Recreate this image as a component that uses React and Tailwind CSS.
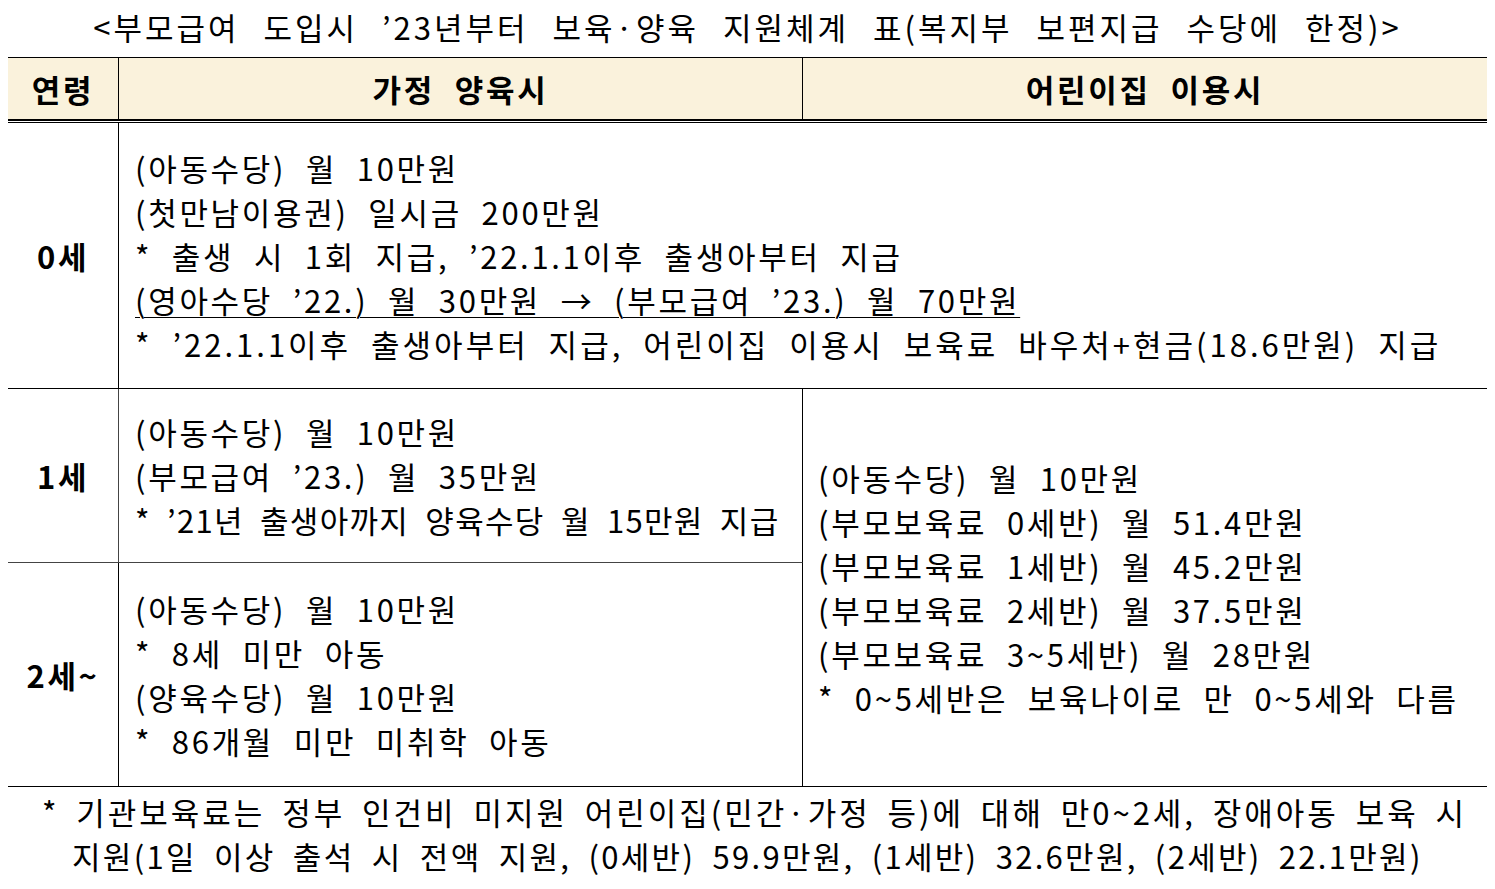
import React from "react";

const font = { fontFamily: '"Noto Sans CJK KR", "Noto Sans", sans-serif' };

const Lines = ({ lines }) => (
  <div className="flex flex-col">
    {lines.map((l, i) => (
      <div
        key={i}
        className={
          "whitespace-nowrap " +
          (l.u ? "underline decoration-1 underline-offset-4 " : "") +
          (l.c || "")
        }
      >
        {l.t}
      </div>
    ))}
  </div>
);

export default function App() {
  const row0 = [
    { t: "(아동수당) 월 10만원" },
    { t: "(첫만남이용권) 일시금 200만원" },
    { t: "* 출생 시 1회 지급, ’22.1.1이후 출생아부터 지급" },
    { t: "(영아수당 ’22.) 월 30만원 → (부모급여 ’23.) 월 70만원", u: true },
    { t: "* ’22.1.1이후 출생아부터 지급, 어린이집 이용시 보육료 바우처+현금(18.6만원) 지급", c: "tracking-[3px]" },
  ];
  const row1 = [
    { t: "(아동수당) 월 10만원" },
    { t: "(부모급여 ’23.) 월 35만원" },
    { t: "* ’21년 출생아까지 양육수당 월 15만원 지급", c: "tracking-[1.3px] [word-spacing:8px]" },
  ];
  const row2 = [
    { t: "(아동수당) 월 10만원" },
    { t: "* 8세 미만 아동" },
    { t: "(양육수당) 월 10만원" },
    { t: "* 86개월 미만 미취학 아동" },
  ];
  const daycare = [
    { t: "(아동수당) 월 10만원" },
    { t: "(부모보육료 0세반) 월 51.4만원" },
    { t: "(부모보육료 1세반) 월 45.2만원" },
    { t: "(부모보육료 2세반) 월 37.5만원" },
    { t: "(부모보육료 3~5세반) 월 28만원" },
    { t: "* 0~5세반은 보육나이로 만 0~5세와 다름" },
  ];

  return (
    <div className="w-[1495px] h-[889px] bg-white text-black overflow-hidden" style={font}>
      <div className="text-[31px] leading-[44px] tracking-[2.7px] [word-spacing:10px]">
        {/* Title */}
        <div className="h-[57px] pt-[5px] text-center whitespace-nowrap tracking-[3px] [word-spacing:14px]">
          &lt;부모급여 도입시 ’23년부터 보육·양육 지원체계 표(복지부 보편지급 수당에 한정)&gt;
        </div>

        {/* Table */}
        <div className="ml-[8px] w-[1479px]">
          {/* Header */}
          <div className="grid grid-cols-[111px_684px_684px] h-[64px] bg-[#faf2dc] border-t border-b-2 border-black font-bold">
            <div className="flex items-center justify-center border-r border-black">연령</div>
            <div className="flex items-center justify-center border-r border-black">가정 양육시</div>
            <div className="flex items-center justify-center">어린이집 이용시</div>
          </div>
          <div className="h-[1px] mt-[1px] bg-black" />

          {/* Body */}
          <div className="grid grid-cols-[111px_684px_684px] grid-rows-[266px_174px_223px] border-b border-black">
            <div className="flex items-center justify-center border-r border-b border-black font-bold">0세</div>
            <div className="col-span-2 flex items-center pl-[16px] border-b border-black">
              <Lines lines={row0} />
            </div>

            <div className="flex items-center justify-center border-r border-b border-[#444] font-bold">1세</div>
            <div className="flex items-center pl-[16px] border-r border-b border-[#444] border-r-black">
              <Lines lines={row1} />
            </div>
            <div className="row-span-2 flex items-center pl-[15px]">
              <Lines lines={daycare} />
            </div>

            <div className="flex items-center justify-center border-r border-black font-bold">2세~</div>
            <div className="flex items-center pl-[16px] border-r border-black">
              <Lines lines={row2} />
            </div>
          </div>
        </div>

        {/* Footnote */}
        <div className="pl-[42px] pr-[28px] pt-[3px] [word-spacing:0px]">
          <div className="whitespace-nowrap tracking-[3px] text-justify [text-align-last:justify]">
            * 기관보육료는 정부 인건비 미지원 어린이집(민간·가정 등)에 대해 만0~2세, 장애아동 보육 시
          </div>
          <div className="pl-[30px] whitespace-nowrap tracking-[2.3px] [word-spacing:8px]">
            지원(1일 이상 출석 시 전액 지원, (0세반) 59.9만원, (1세반) 32.6만원, (2세반) 22.1만원)
          </div>
        </div>
      </div>
    </div>
  );
}
